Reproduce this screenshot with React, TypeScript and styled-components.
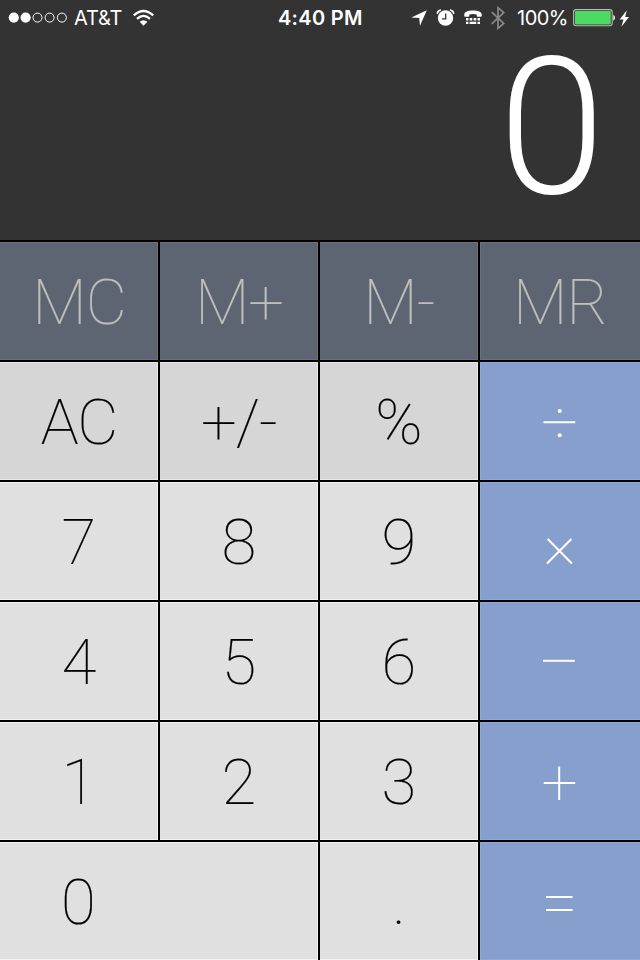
import React from "react";
import styled, { createGlobalStyle } from "styled-components";

const GlobalStyle = createGlobalStyle`
  * { box-sizing: border-box; }
  body { margin: 0; background: #333; }
`;

const Screen = styled.main`
  width: 640px;
  height: 960px;
  display: flex;
  flex-direction: column;
  overflow: hidden;
  background: #333;
  font-family: Roboto, sans-serif;
`;

const StatusBar = styled.header`
  height: 40px;
  display: grid;
  grid-template-columns: 278px 1fr 229px;
  color: #fff;
  font: 400 20px/26px Inter, sans-serif;
`;

const Group = styled.div`
  display: flex;
  align-items: center;
  height: 36px;
  white-space: nowrap;
`;

const Icon = styled.svg<{ $gap?: number }>`
  display: block;
  flex: none;
  margin-left: ${(p) => p.$gap ?? 0}px;
`;

const StatusText = styled.span<{ $left?: number; $spacing?: number; $bold?: boolean }>`
  margin-left: ${(p) => p.$left ?? 0}px;
  letter-spacing: ${(p) => p.$spacing ?? 0}px;
  font-weight: ${(p) => (p.$bold ? 600 : 400)};
`;

const Display = styled.output`
  height: 200px;
  display: flex;
  justify-content: flex-end;
  padding-right: 35px;
  color: #fff;
  font-size: 192px;
  font-weight: 300;
  line-height: 176px;
`;

const Keypad = styled.div`
  height: 720px;
  display: grid;
  grid-template-columns: repeat(4, 160px);
  grid-template-rows: repeat(6, 120px);
  background: #000;
`;

type Tone = "memory" | "function" | "digit" | "operator";

const tones: Record<Tone, { bg: string; edge: string; ink: string }> = {
  memory: { bg: "#5d6573", edge: "#687180", ink: "#bfc0be" },
  function: { bg: "#d6d6d6", edge: "#e8e8e8", ink: "#000" },
  digit: { bg: "#e0e0e0", edge: "#f2f2f2", ink: "#000" },
  operator: { bg: "#869fcc", edge: "#8fa9d8", ink: "#fff" },
};

const Key = styled.button<{ $tone: Tone; $wide?: boolean; $last?: boolean }>`
  grid-column: span ${(p) => (p.$wide ? 2 : 1)};
  display: flex;
  align-items: center;
  justify-content: ${(p) => (p.$wide ? "flex-start" : "center")};
  margin: 2px ${(p) => (p.$last ? 0 : 2)}px 0 0;
  padding: 0 0 0 ${(p) => (p.$wide ? 61 : 0)}px;
  border: 0;
  background: ${(p) => tones[p.$tone].bg};
  box-shadow:
    inset 0 1px 0 ${(p) => tones[p.$tone].edge},
    inset 0 -1px 0 ${(p) => tones[p.$tone].edge},
    inset ${(p) => (p.$last ? 1 : -1)}px 0 0 ${(p) => tones[p.$tone].edge};
  color: ${(p) => tones[p.$tone].ink};
  font: 100 63.5px/118px Roboto, sans-serif;
`;

const Label = styled.span<{ $narrow?: boolean }>`
  margin-top: 4px;
  letter-spacing: ${(p) => (p.$narrow ? -1 : 0)}px;
  -webkit-text-stroke: 0.2px currentColor;
`;

const Operator = styled.svg`
  display: block;
  width: 160px;
  height: 118px;
  fill: none;
  stroke: #fff;
  stroke-width: 2;
`;

type KeyDef = { label: string; tone: Tone; wide?: boolean; drawing?: React.ReactNode };

const keys: KeyDef[] = [
  { label: "MC", tone: "memory" },
  { label: "M+", tone: "memory" },
  { label: "M-", tone: "memory" },
  { label: "MR", tone: "memory" },
  { label: "AC", tone: "function" },
  { label: "+/-", tone: "function" },
  { label: "%", tone: "function" },
  {
    label: "÷",
    tone: "operator",
    drawing: (
      <>
        <path d="M63.5 60.3H95.3" />
        <g fill="#fff" stroke="none">
          <circle cx="79.7" cy="49" r="2" />
          <circle cx="79.7" cy="73.2" r="2" />
        </g>
      </>
    ),
  },
  { label: "7", tone: "digit" },
  { label: "8", tone: "digit" },
  { label: "9", tone: "digit" },
  { label: "×", tone: "operator", drawing: <path d="M67.7 57L91.9 81.5M91.4 57L67 81.5" /> },
  { label: "4", tone: "digit" },
  { label: "5", tone: "digit" },
  { label: "6", tone: "digit" },
  { label: "−", tone: "operator", drawing: <path d="M63 58.8H94.8" /> },
  { label: "1", tone: "digit" },
  { label: "2", tone: "digit" },
  { label: "3", tone: "digit" },
  { label: "+", tone: "operator", drawing: <path d="M63.7 61.1H95.2M79.2 44.5V78" /> },
  { label: "0", tone: "digit", wide: true },
  { label: ".", tone: "digit" },
  { label: "=", tone: "operator", drawing: <path d="M66 55H92.5M66 67.9H92.5" /> },
];

const SignalIcon = () => (
  <Icon $gap={8} width="60" height="12" viewBox="0 0 60 12">
    <g fill="#fff">
      <circle cx="5.8" cy="5.6" r="5.1" />
      <circle cx="17.6" cy="5.6" r="5.1" />
    </g>
    <g fill="none" stroke="#fff">
      <circle cx="29.5" cy="5.6" r="4.5" />
      <circle cx="41.6" cy="5.6" r="4.5" />
      <circle cx="53.9" cy="5.6" r="4.5" />
    </g>
  </Icon>
);

const WifiIcon = () => (
  <Icon $gap={10} width="23" height="18" viewBox="0 0 23 18">
    <g fill="none" stroke="#fff" strokeWidth="2.3">
      <path d="M1.8 6.4Q11.5-2.5 21.2 6.4" />
      <path d="M5 9.8Q11.5 4 18 9.8" />
    </g>
    <path d="M7.6 12.8Q11.5 9.5 15.4 12.8L11.5 16.7Z" fill="#fff" />
  </Icon>
);

const LocationIcon = () => (
  <Icon width="16" height="16" viewBox="0 0 16 16">
    <path d="M.3 7.4L15.8.2L9 15.8L8.2 8Z" fill="#fff" />
  </Icon>
);

const AlarmIcon = () => (
  <Icon $gap={9} width="19" height="18" viewBox="0 0 19 18">
    <circle cx="9.5" cy="9" r="7.7" fill="#fff" />
    <path d="M1.2 4.8Q1.7 1.4 5 1.1M14 1.1Q17.3 1.4 17.8 4.8" fill="none" stroke="#fff" strokeWidth="1.5" />
    <path d="M9.7 4.6V9.8H6" fill="none" stroke="#333" strokeWidth="1.3" />
  </Icon>
);

const TtyIcon = () => (
  <Icon $gap={9} width="18" height="16" viewBox="0 0 18 16">
    <path d="M.3 6V4.2C.3 1.7 4 .4 9 .4S17.7 1.7 17.7 4.2V6Q17.7 6.8 17 6.8H13.5Q12.7 6.8 12.7 6V4.5Q9 3.7 5.3 4.5V6Q5.3 6.8 4.5 6.8H1Q.3 6.8.3 6Z" fill="#fff" />
    <path d="M2 9.2H4.4M5.6 9.2H8.3M9.6 9.2H12.3M13.5 9.2H16M2 12.9H4.4M5.6 12.9H12.3M13.5 12.9H16" stroke="#fff" strokeWidth="2.4" />
  </Icon>
);

const BluetoothIcon = () => (
  <Icon $gap={9} width="14" height="24" viewBox="0 0 14 24">
    <path d="M.8 6.2L12.7 17.5L7 22.3V1.7L12.7 6.6L.8 17.8" fill="none" stroke="#8a8a8a" strokeWidth="1.7" />
  </Icon>
);

const BatteryIcon = () => (
  <Icon $gap={5} width="43" height="18" viewBox="0 0 43 18">
    <rect x=".6" y=".6" width="38.6" height="16.2" rx="2.5" fill="#333" stroke="#bbb" strokeWidth="1.1" />
    <rect x="2" y="2" width="35.8" height="13.4" rx="1" fill="#4cd964" />
    <path d="M40.3 5.7Q42 6.5 42 8.7T40.3 11.7Z" fill="#fff" />
  </Icon>
);

const BoltIcon = () => (
  <Icon $gap={3} width="11" height="17" viewBox="0 0 11 17">
    <path d="M7.8.2L.7 9.4H4.5L2.4 16.7L10 7H6.2Z" fill="#fff" />
  </Icon>
);

export default function App() {
  return (
    <Screen>
      <GlobalStyle />
      <StatusBar>
        <Group>
          <SignalIcon />
          <StatusText $left={6} $spacing={-0.2}>AT&amp;T</StatusText>
          <WifiIcon />
        </Group>
        <Group>
          <StatusText $bold $spacing={0.3}>4:40 PM</StatusText>
        </Group>
        <Group>
          <LocationIcon />
          <AlarmIcon />
          <TtyIcon />
          <BluetoothIcon />
          <StatusText $left={12} $spacing={-0.5}>100%</StatusText>
          <BatteryIcon />
          <BoltIcon />
        </Group>
      </StatusBar>
      <Display>0</Display>
      <Keypad>
        {keys.map((key, i) => (
          <Key key={i} $tone={key.tone} $wide={key.wide} $last={key.tone === "operator" || key.label === "MR"} aria-label={key.label}>
            {key.drawing ? (
              <Operator viewBox="0 0 160 118">{key.drawing}</Operator>
            ) : (
              <Label $narrow={key.label.length > 1}>{key.label}</Label>
            )}
          </Key>
        ))}
      </Keypad>
    </Screen>
  );
}
